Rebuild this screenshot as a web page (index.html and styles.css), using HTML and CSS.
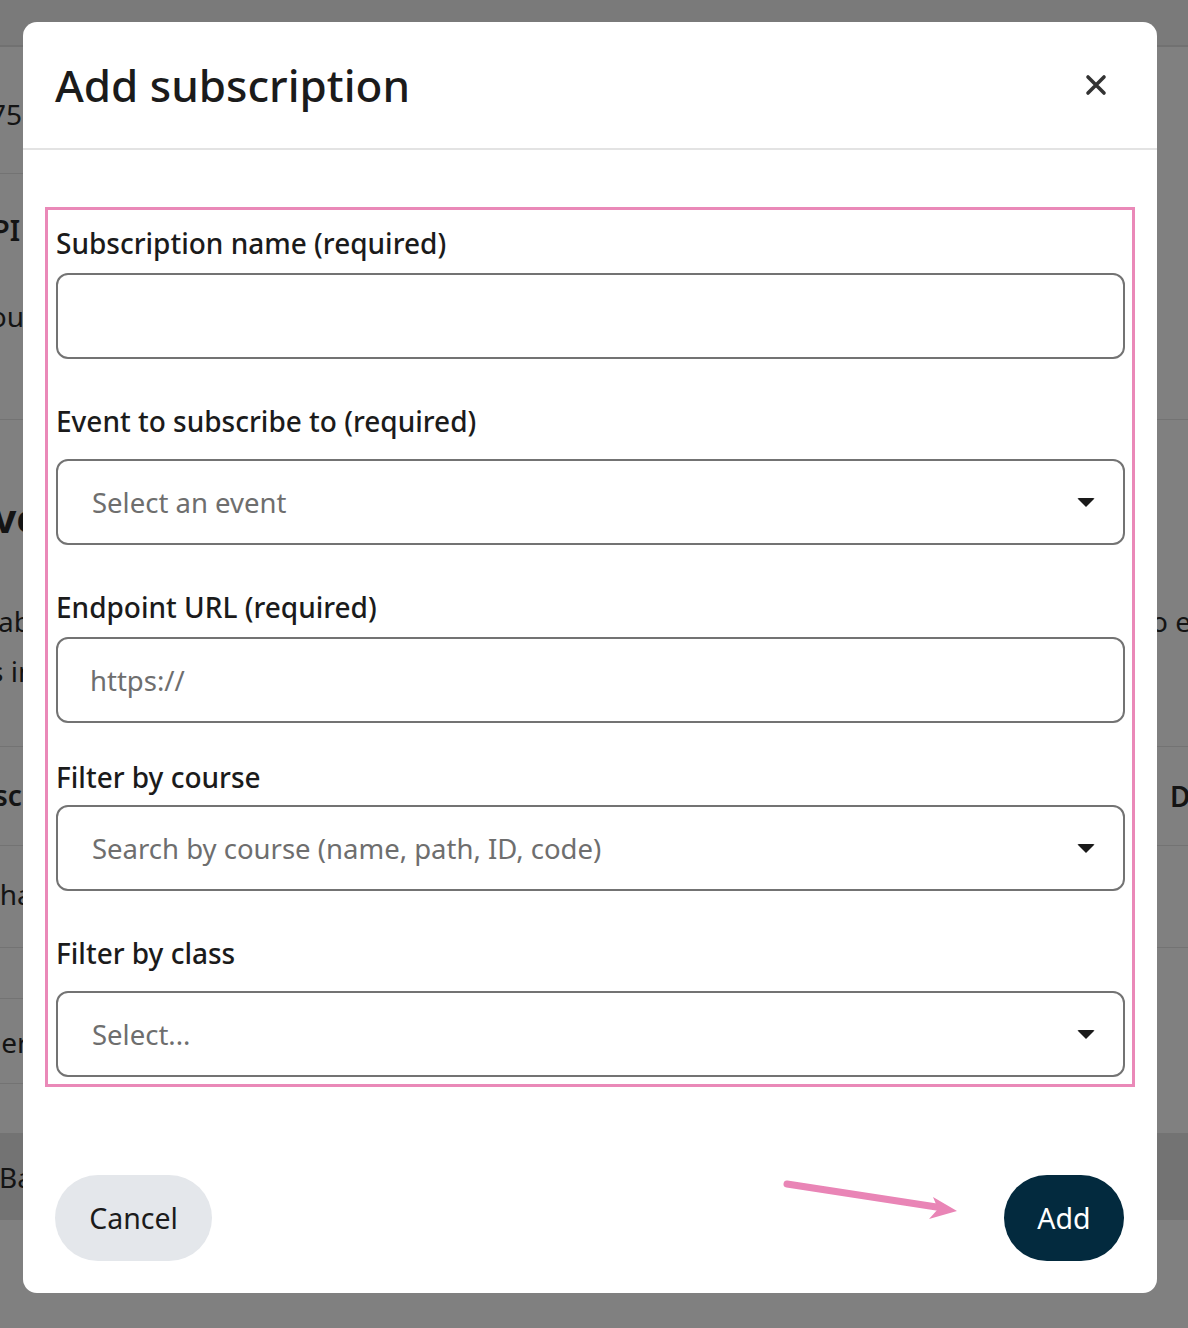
FILE: index.html
```html
<!DOCTYPE html>
<html lang="en">
<head>
<meta charset="utf-8">
<title>Add subscription</title>
<link rel="stylesheet" href="styles.css">
</head>
<body>
<div class="page">
  <div class="topbar"></div>
  <div class="row row-a part"><span class="bg-text left-75">1275</span></div>
  <div class="row row-b full">
    <span class="bg-text bold left-pi">API</span>
    <span class="bg-text left-ou">You</span>
  </div>
  <div class="row row-c full">
    <span class="bg-text heading left-ve">Eve</span>
    <span class="bg-text left-ab">ab</span>
    <span class="bg-text left-in">s in</span>
    <span class="bg-text right-oe">to e</span>
  </div>
  <div class="row row-d full">
    <span class="bg-text bold left-scr">Descr</span>
    <span class="bg-text bold right-d">D</span>
  </div>
  <div class="row row-e full"><span class="bg-text left-ha">Cha</span></div>
  <div class="row row-f part"></div>
  <div class="row row-g part"><span class="bg-text left-er">Other</span></div>
  <div class="row row-h"></div>
  <div class="row row-i"><span class="bg-text left-ba">Ba</span></div>
</div>

<div class="modal" role="dialog" aria-labelledby="dlg-title">
  <div class="modal-header">
    <h2 id="dlg-title" class="modal-title">Add subscription</h2>
    <button class="close-btn" aria-label="Close">
      <svg width="22" height="22" viewBox="0 0 22 22"><path d="M3 3 L19 19 M19 3 L3 19" stroke="#333" stroke-width="3.6" stroke-linecap="round"/></svg>
    </button>
  </div>
  <div class="modal-body">
    <form class="form-box">
      <label class="field-label l1">Subscription name (required)</label>
      <div class="control c1"></div>

      <label class="field-label l2">Event to subscribe to (required)</label>
      <div class="control select c2"><span class="placeholder">Select an event</span><span class="caret"></span></div>

      <label class="field-label l3">Endpoint URL (required)</label>
      <div class="control c3"><span class="placeholder ph-url">https://</span></div>

      <label class="field-label l4">Filter by course</label>
      <div class="control select c4"><span class="placeholder">Search by course (name, path, ID, code)</span><span class="caret"></span></div>

      <label class="field-label l5">Filter by class</label>
      <div class="control select c5"><span class="placeholder">Select...</span><span class="caret"></span></div>
    </form>
  </div>
  <div class="modal-footer">
    <button class="btn btn-cancel">Cancel</button>
    <button class="btn btn-add">Add</button>
    <svg class="arrow" width="200" height="50" viewBox="0 0 200 50">
      <line x1="4" y1="4" x2="160" y2="28" stroke="#e985b6" stroke-width="7" stroke-linecap="round"/>
      <polygon points="174,31 150,17 155,29 146,39" fill="#e985b6"/>
    </svg>
  </div>
</div>
</body>
</html>
```

FILE: styles.css
```css
* { box-sizing: border-box; }
html, body { margin: 0; padding: 0; }
body {
  width: 1188px;
  height: 1328px;
  overflow: hidden;
  background: #808080;
  font-family: "Noto Sans", "Open Sans", sans-serif;
  position: relative;
}

/* background page (dimmed) */
.page { width: 1188px; }
.topbar {
  height: 47px;
  background: #7a7a7a;
  border-bottom: 2px solid #717171;
}
.row { position: relative; }
.row.full { border-bottom: 1px solid #737373; }
.row.part::after {
  content: "";
  position: absolute;
  left: 0;
  bottom: -1px;
  width: 60px;
  height: 1px;
  background: #737373;
}
.row-a { height: 126px; }
.row-b { height: 247px; }
.row-c { height: 327px; }
.row-d { height: 99px; }
.row-e { height: 102px; }
.row-f { height: 50px; }
.row-g { height: 85px; }
.row-h { height: 50px; }
.row-i { height: 87px; background: #737373; }

.bg-text {
  position: absolute;
  font-size: 28px;
  color: #141414;
  white-space: nowrap;
  line-height: 1;
}
.bg-text.bold { font-weight: 600; }
.bg-text.heading { font-size: 40px; font-weight: 700; }
.left-75 { right: 1166px; top: 53px; }
.left-pi { right: 1168px; top: 43px; }
.left-ou { right: 1164px; top: 129px; }
.left-ve { left: -29px; top: 78px; }
.left-ab { left: -2px; top: 187px; }
.left-in { left: -10px; top: 237px; }
.right-oe { left: 1141px; top: 187px; }
.left-scr { left: -43px; top: 34px; }
.right-d { left: 1170px; top: 35px; }
.left-ha { left: -18px; top: 34px; }
.left-er { left: -48px; top: 30px; }
.left-ba { left: -1px; top: 30px; }

/* modal */
.modal {
  position: absolute;
  left: 23px;
  top: 22px;
  width: 1134px;
  height: 1271px;
  background: #fff;
  border-radius: 14px;
  display: flex;
  flex-direction: column;
}
.modal-header {
  height: 128px;
  border-bottom: 2px solid #e3e3e3;
  display: flex;
  align-items: center;
  justify-content: space-between;
  padding: 0 50px 0 32px;
}
.modal-title {
  margin: 0;
  font-size: 44px;
  font-weight: 500;
  color: #1b1b1b;
}
.close-btn {
  background: none;
  border: none;
  padding: 0;
  width: 22px;
  height: 22px;
  display: flex;
  cursor: pointer;
}

.modal-body { padding: 57px 22px 0 22px; }
.form-box {
  border: 3px solid #ea89b8;
  padding: 13px 7px 7px 8px;
  display: flex;
  flex-direction: column;
  height: 880px;
}
.field-label {
  font-size: 28px;
  font-weight: 500;
  line-height: 40px;
  color: #1b1b1b;
}
.l1 { margin: 0 0 10px; }
.l2 { margin: 42px 0 18px; }
.l3 { margin: 42px 0 10px; }
.l4 { margin: 34px 0 8px; }
.l5 { margin: 42px 0 18px; }

.control {
  height: 86px;
  border: 2px solid #737373;
  border-radius: 12px;
  display: flex;
  align-items: center;
  padding: 0 28px 0 34px;
  justify-content: space-between;
}
.placeholder {
  font-size: 27.5px;
  color: #6e6e6e;
}
.ph-url { margin-left: -2px; }
.caret {
  width: 0;
  height: 0;
  border-left: 9px solid transparent;
  border-right: 9px solid transparent;
  border-top: 9px solid #1a1a1a;
  border-radius: 2px;
}

.modal-footer {
  margin-top: auto;
  padding: 0 33px 32px 32px;
  display: flex;
  justify-content: space-between;
  align-items: center;
  position: relative;
}
.btn {
  height: 86px;
  border: none;
  border-radius: 43px;
  font-family: inherit;
  font-size: 28.5px;
  cursor: pointer;
}
.btn-cancel {
  width: 157px;
  background: #e4e7eb;
  color: #1b1b1b;
}
.btn-add {
  width: 120px;
  background: #032a3e;
  color: #fff;
}
.arrow {
  position: absolute;
  left: 760px;
  top: 5px;
}
```
